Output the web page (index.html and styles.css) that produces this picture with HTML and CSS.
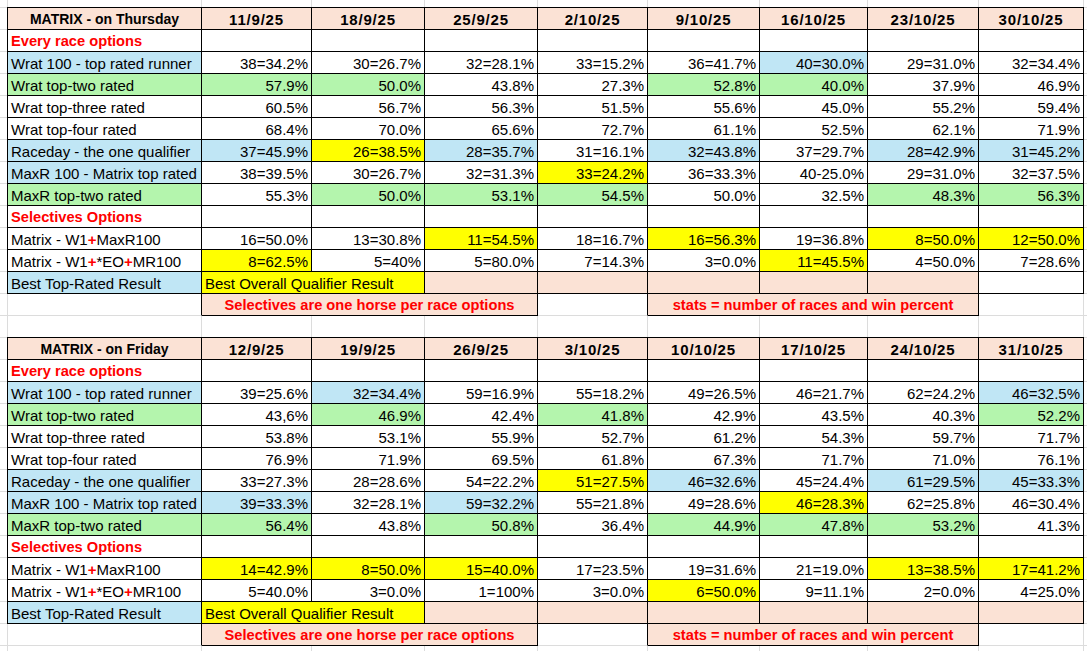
FILE: index.html
```html
<!DOCTYPE html>
<html lang="en">
<head>
<meta charset="utf-8">
<title>Matrix results</title>
<link rel="stylesheet" href="styles.css">
</head>
<body>
<main class="sheet">
  <section class="block">
    <div class="tbl">
      <div class="c hdr title">MATRIX - on Thursday</div>
      <div class="c hdr date">11/9/25</div>
      <div class="c hdr date">18/9/25</div>
      <div class="c hdr date">25/9/25</div>
      <div class="c hdr date">2/10/25</div>
      <div class="c hdr date">9/10/25</div>
      <div class="c hdr date">16/10/25</div>
      <div class="c hdr date">23/10/25</div>
      <div class="c hdr date">30/10/25</div>

      <div class="c sect">Every race options</div>
      <div class="c"></div><div class="c"></div><div class="c"></div><div class="c"></div>
      <div class="c"></div><div class="c"></div><div class="c"></div><div class="c"></div>

      <div class="c blue">Wrat 100 - top rated runner</div>
      <div class="c num">38=34.2%</div>
      <div class="c num">30=26.7%</div>
      <div class="c num">32=28.1%</div>
      <div class="c num">33=15.2%</div>
      <div class="c num">36=41.7%</div>
      <div class="c num blue">40=30.0%</div>
      <div class="c num">29=31.0%</div>
      <div class="c num">32=34.4%</div>

      <div class="c green">Wrat top-two rated</div>
      <div class="c num green">57.9%</div>
      <div class="c num green">50.0%</div>
      <div class="c num">43.8%</div>
      <div class="c num">27.3%</div>
      <div class="c num green">52.8%</div>
      <div class="c num green">40.0%</div>
      <div class="c num">37.9%</div>
      <div class="c num">46.9%</div>

      <div class="c">Wrat top-three rated</div>
      <div class="c num">60.5%</div>
      <div class="c num">56.7%</div>
      <div class="c num">56.3%</div>
      <div class="c num">51.5%</div>
      <div class="c num">55.6%</div>
      <div class="c num">45.0%</div>
      <div class="c num">55.2%</div>
      <div class="c num">59.4%</div>

      <div class="c">Wrat top-four rated</div>
      <div class="c num">68.4%</div>
      <div class="c num">70.0%</div>
      <div class="c num">65.6%</div>
      <div class="c num">72.7%</div>
      <div class="c num">61.1%</div>
      <div class="c num">52.5%</div>
      <div class="c num">62.1%</div>
      <div class="c num">71.9%</div>

      <div class="c blue">Raceday - the one qualifier</div>
      <div class="c num blue">37=45.9%</div>
      <div class="c num yellow">26=38.5%</div>
      <div class="c num blue">28=35.7%</div>
      <div class="c num">31=16.1%</div>
      <div class="c num blue">32=43.8%</div>
      <div class="c num">37=29.7%</div>
      <div class="c num blue">28=42.9%</div>
      <div class="c num blue">31=45.2%</div>

      <div class="c blue">MaxR 100 - Matrix top rated</div>
      <div class="c num">38=39.5%</div>
      <div class="c num">30=26.7%</div>
      <div class="c num">32=31.3%</div>
      <div class="c num yellow">33=24.2%</div>
      <div class="c num">36=33.3%</div>
      <div class="c num">40-25.0%</div>
      <div class="c num">29=31.0%</div>
      <div class="c num">32=37.5%</div>

      <div class="c green">MaxR top-two rated</div>
      <div class="c num">55.3%</div>
      <div class="c num green">50.0%</div>
      <div class="c num green">53.1%</div>
      <div class="c num green">54.5%</div>
      <div class="c num">50.0%</div>
      <div class="c num">32.5%</div>
      <div class="c num green">48.3%</div>
      <div class="c num green">56.3%</div>

      <div class="c sect">Selectives Options</div>
      <div class="c"></div><div class="c"></div><div class="c"></div><div class="c"></div>
      <div class="c"></div><div class="c"></div><div class="c"></div><div class="c"></div>

      <div class="c">Matrix - W1<span class="plus">+</span>MaxR100</div>
      <div class="c num">16=50.0%</div>
      <div class="c num">13=30.8%</div>
      <div class="c num yellow">11=54.5%</div>
      <div class="c num">18=16.7%</div>
      <div class="c num yellow">16=56.3%</div>
      <div class="c num">19=36.8%</div>
      <div class="c num yellow">8=50.0%</div>
      <div class="c num yellow">12=50.0%</div>

      <div class="c">Matrix - W1<span class="plus">+</span>*EO<span class="plus">+</span>MR100</div>
      <div class="c num yellow">8=62.5%</div>
      <div class="c num">5=40%</div>
      <div class="c num">5=80.0%</div>
      <div class="c num">7=14.3%</div>
      <div class="c num">3=0.0%</div>
      <div class="c num yellow">11=45.5%</div>
      <div class="c num">4=50.0%</div>
      <div class="c num">7=28.6%</div>

      <div class="c blue">Best Top-Rated Result</div>
      <div class="c yellow span2">Best Overall Qualifier Result</div>
      <div class="c peach"></div>
      <div class="c peach"></div>
      <div class="c peach"></div>
      <div class="c peach"></div>
      <div class="c peach"></div>
      <div class="c"></div>
    </div>
    <div class="legend">
      <div class="c nb"></div>
      <div class="c peach note span3">Selectives are one horse per race options</div>
      <div class="c nb"></div>
      <div class="c peach note span3">stats = number of races and win percent</div>
      <div class="c nb nr"></div>
    </div>
  </section>

  <section class="block">
    <div class="tbl">
      <div class="c hdr title">MATRIX - on Friday</div>
      <div class="c hdr date">12/9/25</div>
      <div class="c hdr date">19/9/25</div>
      <div class="c hdr date">26/9/25</div>
      <div class="c hdr date">3/10/25</div>
      <div class="c hdr date">10/10/25</div>
      <div class="c hdr date">17/10/25</div>
      <div class="c hdr date">24/10/25</div>
      <div class="c hdr date">31/10/25</div>

      <div class="c sect">Every race options</div>
      <div class="c"></div><div class="c"></div><div class="c"></div><div class="c"></div>
      <div class="c"></div><div class="c"></div><div class="c"></div><div class="c"></div>

      <div class="c blue">Wrat 100 - top rated runner</div>
      <div class="c num">39=25.6%</div>
      <div class="c num blue">32=34.4%</div>
      <div class="c num">59=16.9%</div>
      <div class="c num">55=18.2%</div>
      <div class="c num">49=26.5%</div>
      <div class="c num">46=21.7%</div>
      <div class="c num">62=24.2%</div>
      <div class="c num blue">46=32.5%</div>

      <div class="c green">Wrat top-two rated</div>
      <div class="c num">43,6%</div>
      <div class="c num green">46.9%</div>
      <div class="c num">42.4%</div>
      <div class="c num green">41.8%</div>
      <div class="c num">42.9%</div>
      <div class="c num">43.5%</div>
      <div class="c num">40.3%</div>
      <div class="c num green">52.2%</div>

      <div class="c">Wrat top-three rated</div>
      <div class="c num">53.8%</div>
      <div class="c num">53.1%</div>
      <div class="c num">55.9%</div>
      <div class="c num">52.7%</div>
      <div class="c num">61.2%</div>
      <div class="c num">54.3%</div>
      <div class="c num">59.7%</div>
      <div class="c num">71.7%</div>

      <div class="c">Wrat top-four rated</div>
      <div class="c num">76.9%</div>
      <div class="c num">71.9%</div>
      <div class="c num">69.5%</div>
      <div class="c num">61.8%</div>
      <div class="c num">67.3%</div>
      <div class="c num">71.7%</div>
      <div class="c num">71.0%</div>
      <div class="c num">76.1%</div>

      <div class="c blue">Raceday - the one qualifier</div>
      <div class="c num">33=27.3%</div>
      <div class="c num">28=28.6%</div>
      <div class="c num">54=22.2%</div>
      <div class="c num yellow">51=27.5%</div>
      <div class="c num blue">46=32.6%</div>
      <div class="c num">45=24.4%</div>
      <div class="c num blue">61=29.5%</div>
      <div class="c num blue">45=33.3%</div>

      <div class="c blue">MaxR 100 - Matrix top rated</div>
      <div class="c num blue">39=33.3%</div>
      <div class="c num">32=28.1%</div>
      <div class="c num blue">59=32.2%</div>
      <div class="c num">55=21.8%</div>
      <div class="c num">49=28.6%</div>
      <div class="c num yellow">46=28.3%</div>
      <div class="c num">62=25.8%</div>
      <div class="c num">46=30.4%</div>

      <div class="c green">MaxR top-two rated</div>
      <div class="c num green">56.4%</div>
      <div class="c num">43.8%</div>
      <div class="c num green">50.8%</div>
      <div class="c num">36.4%</div>
      <div class="c num green">44.9%</div>
      <div class="c num green">47.8%</div>
      <div class="c num green">53.2%</div>
      <div class="c num">41.3%</div>

      <div class="c sect">Selectives Options</div>
      <div class="c"></div><div class="c"></div><div class="c"></div><div class="c"></div>
      <div class="c"></div><div class="c"></div><div class="c"></div><div class="c"></div>

      <div class="c">Matrix - W1<span class="plus">+</span>MaxR100</div>
      <div class="c num yellow">14=42.9%</div>
      <div class="c num yellow">8=50.0%</div>
      <div class="c num yellow">15=40.0%</div>
      <div class="c num">17=23.5%</div>
      <div class="c num">19=31.6%</div>
      <div class="c num">21=19.0%</div>
      <div class="c num yellow">13=38.5%</div>
      <div class="c num yellow">17=41.2%</div>

      <div class="c">Matrix - W1<span class="plus">+</span>*EO<span class="plus">+</span>MR100</div>
      <div class="c num">5=40.0%</div>
      <div class="c num">3=0.0%</div>
      <div class="c num">1=100%</div>
      <div class="c num">3=0.0%</div>
      <div class="c num yellow">6=50.0%</div>
      <div class="c num">9=11.1%</div>
      <div class="c num">2=0.0%</div>
      <div class="c num">4=25.0%</div>

      <div class="c blue">Best Top-Rated Result</div>
      <div class="c yellow span2">Best Overall Qualifier Result</div>
      <div class="c peach"></div>
      <div class="c peach"></div>
      <div class="c peach"></div>
      <div class="c peach"></div>
      <div class="c peach"></div>
      <div class="c peach"></div>
    </div>
    <div class="legend">
      <div class="c nb"></div>
      <div class="c peach note span3">Selectives are one horse per race options</div>
      <div class="c nb"></div>
      <div class="c peach note span3">stats = number of races and win percent</div>
      <div class="c nb nr"></div>
    </div>
  </section>
</main>
</body>
</html>
```

FILE: styles.css
```css
* {
  box-sizing: border-box;
}

:root {
  --grid: #dcdcdc;
  --cols: 194px 110px 113px 113px 110px 112px 108px 111px 105px;
}

body {
  margin: 0;
  font-family: "Liberation Sans", Arial, sans-serif;
  font-size: 15px;
  color: #000;
}

.sheet {
  min-height: 100vh;
  padding-top: 7px;
  display: flex;
  flex-direction: column;
  gap: 21px;
  background-color: #fff;
  background-image:
    linear-gradient(var(--grid), var(--grid)),
    linear-gradient(var(--grid), var(--grid)),
    linear-gradient(var(--grid), var(--grid)),
    linear-gradient(var(--grid), var(--grid)),
    linear-gradient(var(--grid), var(--grid)),
    linear-gradient(var(--grid), var(--grid)),
    linear-gradient(var(--grid), var(--grid)),
    linear-gradient(var(--grid), var(--grid)),
    linear-gradient(var(--grid), var(--grid)),
    linear-gradient(var(--grid), var(--grid)),
    linear-gradient(to bottom, var(--grid) 1px, transparent 1px);
  background-size:
    1px 100%, 1px 100%, 1px 100%, 1px 100%, 1px 100%,
    1px 100%, 1px 100%, 1px 100%, 1px 100%, 1px 100%,
    100% 22px;
  background-position:
    7px 0, 201px 0, 311px 0, 424px 0, 537px 0,
    647px 0, 759px 0, 867px 0, 978px 0, 1083px 0,
    0 7px;
  background-repeat:
    no-repeat, no-repeat, no-repeat, no-repeat, no-repeat,
    no-repeat, no-repeat, no-repeat, no-repeat, no-repeat,
    repeat-y;
}

.block {
  display: flex;
  flex-direction: column;
}

.tbl {
  display: grid;
  grid-template-columns: var(--cols);
  grid-auto-rows: 22px;
  width: fit-content;
  margin-left: 7px;
  border-left: 1px solid #000;
  border-top: 1px solid #000;
}

.legend {
  display: grid;
  grid-template-columns: var(--cols);
  grid-auto-rows: 22px;
  width: fit-content;
  margin-left: 8px;
}

.c {
  border-right: 1px solid #000;
  border-bottom: 1px solid #000;
  padding: 2px 3px 0;
  line-height: 19px;
  white-space: nowrap;
  overflow: hidden;
}

.num {
  text-align: right;
}

.hdr {
  background: #fbe2d5;
  font-weight: bold;
  text-align: center;
}

.title {
  font-size: 14px;
}

.date {
  letter-spacing: 0.8px;
}

.sect {
  color: #ff0000;
  font-weight: bold;
  font-size: 14.67px;
}

.plus {
  color: #ff0000;
  font-weight: bold;
}

.note {
  color: #ff0000;
  font-weight: bold;
  font-size: 14.67px;
  text-align: center;
}

.blue {
  background: #c0e6f5;
}

.green {
  background: #b4f5ad;
}

.yellow {
  background: #ffff00;
}

.peach {
  background: #fbe2d5;
}

.span2 {
  grid-column: span 2;
}

.span3 {
  grid-column: span 3;
}

.nb {
  border-bottom-color: transparent;
}

.nr {
  border-right-color: transparent;
}
```
